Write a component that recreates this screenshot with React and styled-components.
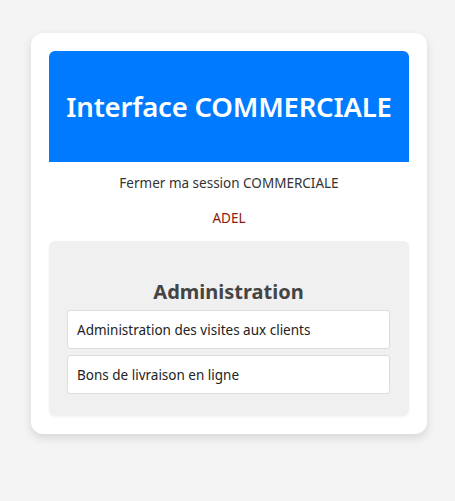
import React from "react";
import styled, { createGlobalStyle } from "styled-components";

const Global = createGlobalStyle`
  html, body { margin: 0; padding: 0; background: #f4f4f4; }
  body { font-family: "Noto Sans", "Open Sans", sans-serif; }
`;

const Page = styled.div`
  padding: 33px 28px 40px 31px;
`;

const Card = styled.div`
  width: 396px;
  box-sizing: border-box;
  background: #fff;
  border-radius: 12px;
  box-shadow: 0 4px 10px rgba(0,0,0,0.12);
  padding: 18px 18px 18px;
  display: flex;
  flex-direction: column;
`;

const Header = styled.div`
  background: #007bff;
  border-radius: 6px 6px 0 0;
  height: 111px;
  display: flex;
  align-items: center;
  justify-content: center;
`;

const Title = styled.h1`
  margin: 0;
  color: #fff;
  font-size: 27.5px;
  font-weight: 600;
  letter-spacing: -0.2px;
`;

const Logout = styled.div`
  text-align: center;
  font-size: 13.5px;
  color: #333;
  margin-top: 12px;
  line-height: 18px;
`;

const User = styled.div`
  text-align: center;
  font-size: 13.5px;
  color: #8b1a0c;
  margin-top: 17px;
  line-height: 18px;
`;

const Panel = styled.div`
  margin-top: 14px;
  background: #f0f0f0;
  border-radius: 6px;
  box-shadow: 0 1px 3px rgba(0,0,0,0.05);
  padding: 36px 19px 22px 18px;
  display: flex;
  flex-direction: column;
  gap: 6px;
`;

const PanelTitle = styled.h2`
  margin: 0 0 -3px;
  text-align: center;
  font-size: 20px;
  font-weight: 700;
  color: #444;
  line-height: 30px;
`;

const Item = styled.div`
  background: #fff;
  border: 1px solid #dcdcdc;
  border-radius: 3px;
  height: 39px;
  box-sizing: border-box;
  display: flex;
  align-items: center;
  padding: 0 9px;
  font-size: 13.5px;
  color: #222;
`;

export default function App() {
  return (
    <>
      <Global />
      <Page>
        <Card>
          <Header>
            <Title>Interface COMMERCIALE</Title>
          </Header>
          <Logout>Fermer ma session COMMERCIALE</Logout>
          <User>ADEL</User>
          <Panel>
            <PanelTitle>Administration</PanelTitle>
            <Item>Administration des visites aux clients</Item>
            <Item>Bons de livraison en ligne</Item>
          </Panel>
        </Card>
      </Page>
    </>
  );
}
